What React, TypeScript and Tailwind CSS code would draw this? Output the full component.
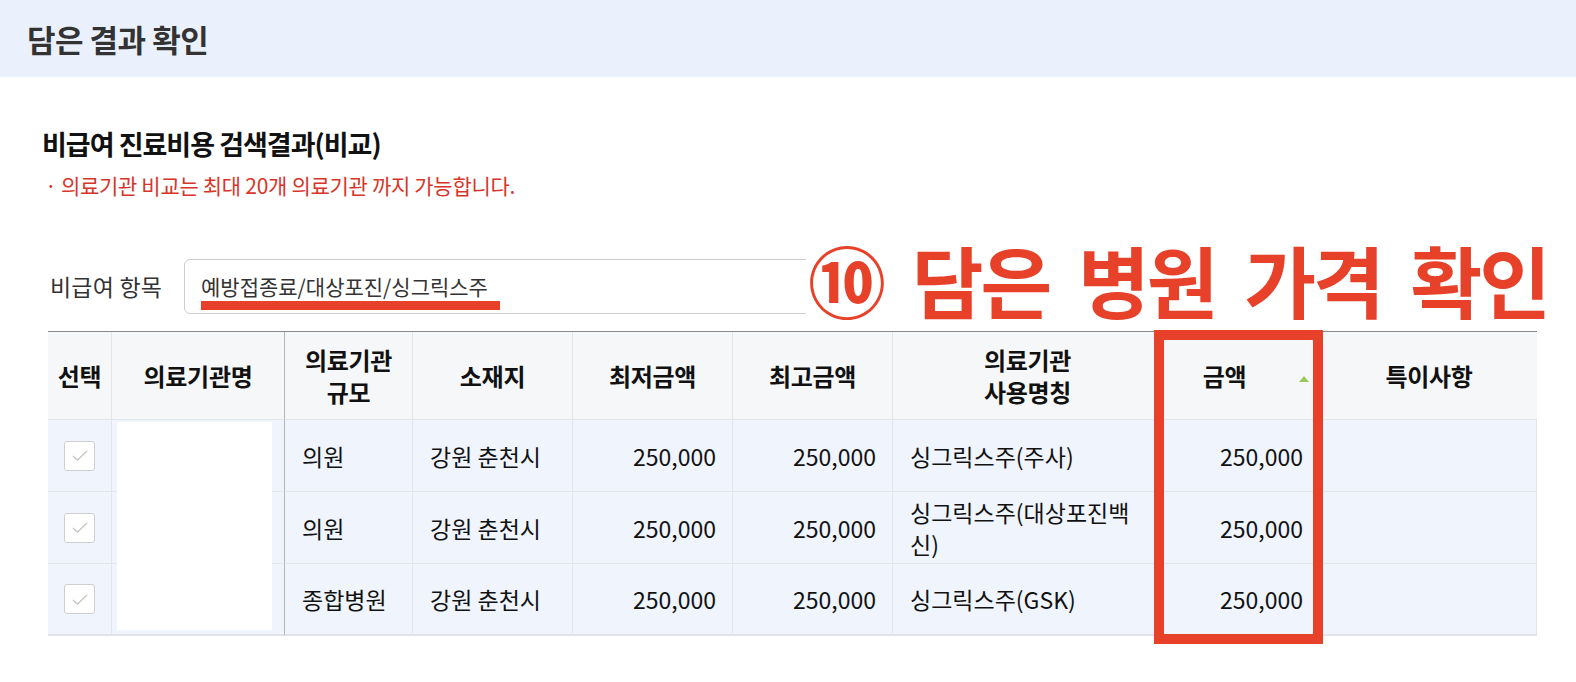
import React from 'react';

const cols = 'grid-cols-[64px_173px_128px_160px_160px_160px_270px_158px_216px]';

type Row = {
  size: string;
  place: string;
  min: string;
  max: string;
  name: React.ReactNode;
  price: string;
};

const rows: Row[] = [
  { size: '의원', place: '강원 춘천시', min: '250,000', max: '250,000', name: '싱그릭스주(주사)', price: '250,000' },
  {
    size: '의원',
    place: '강원 춘천시',
    min: '250,000',
    max: '250,000',
    name: (
      <>
        싱그릭스주(대상포진백
        <br />
        신)
      </>
    ),
    price: '250,000',
  },
  { size: '종합병원', place: '강원 춘천시', min: '250,000', max: '250,000', name: '싱그릭스주(GSK)', price: '250,000' },
];

function CheckBox() {
  return (
    <div className="flex h-[30px] w-[31px] items-center justify-center rounded-[3px] border border-[#cfcfcf] bg-white">
      <svg width="18" height="13" viewBox="0 0 18 13" fill="none">
        <path d="M2 7 L6.5 11 L16 2" stroke="#c6c6c6" strokeWidth="1.3" />
      </svg>
    </div>
  );
}

function HeadCell({ children, dark }: { children: React.ReactNode; dark?: boolean }) {
  return (
    <div
      className={`flex h-[88px] items-center justify-center border-b border-r border-b-[#e2e5ea] text-center text-[24px] font-bold leading-[32px] tracking-[-0.3px] text-[#111] ${
        dark ? 'border-r-[#b4b4b4]' : 'border-r-[#e2e5ea]'
      }`}
    >
      {children}
    </div>
  );
}

function Cell({
  children,
  align = 'left',
  dark,
  last,
  pr = 'pr-[16px]',
}: {
  children?: React.ReactNode;
  align?: 'left' | 'right' | 'center';
  dark?: boolean;
  last?: boolean;
  pr?: string;
}) {
  const a = align === 'right' ? `justify-end ${pr}` : align === 'center' ? 'justify-center' : 'justify-start pl-[17px]';
  return (
    <div
      className={`flex h-[72px] items-center border-r bg-[#eff4fd] text-[23px] leading-[32px] text-[#111] ${a} ${
        dark ? 'border-r-[#b4b4b4]' : 'border-r-[#e2e5ea]'
      } ${last ? 'border-b-2 border-b-[#e0e3e8]' : 'border-b border-b-[#e2e5ea]'}`}
    >
      {children}
    </div>
  );
}

export default function App() {
  return (
    <div className="relative min-h-[682px] w-[1576px] bg-white font-['Noto_Sans_CJK_KR',sans-serif]">
      <div className="flex h-[77px] items-center bg-[#eaf1fd] pl-[27px]">
        <h1 className="text-[31px] font-bold leading-none tracking-[-0.5px] text-[#333]">담은 결과 확인</h1>
      </div>

      <div className="pl-[48px]">
        <h2 className="mt-[49px] -ml-[6px] text-[27px] font-bold leading-[36px] tracking-[-1px] text-[#111]">
          비급여 진료비용 검색결과(비교)
        </h2>
        <p className="mt-[11px] -ml-[3px] text-[21px] leading-[24px] tracking-[-0.3px] text-[#d8352a]">
          · 의료기관 비교는 최대 20개 의료기관 까지 가능합니다.
        </p>

        <div className="mt-[62px] flex items-center">
          <span className="w-[136px] pl-[2px] text-[23px] tracking-[0.2px] text-[#333]">비급여 항목</span>
          <div className="relative flex h-[55px] w-[1000px] items-center rounded-[6px] border border-[#cdcdcd] pl-[16px]">
            <span className="text-[21px] text-[#333]">예방접종료/대상포진/싱그릭스주</span>
            <div className="absolute left-[16px] top-[41px] h-[9px] w-[299px] bg-[#e8412a]" />
          </div>
        </div>

        <div className={`relative mt-[17px] grid w-[1489px] ${cols} border-t border-t-[#8a8a8a] bg-[#f6f7f9]`}>
          <HeadCell>선택</HeadCell>
          <HeadCell dark>의료기관명</HeadCell>
          <HeadCell>
            의료기관
            <br />
            규모
          </HeadCell>
          <HeadCell>소재지</HeadCell>
          <HeadCell>최저금액</HeadCell>
          <HeadCell>최고금액</HeadCell>
          <HeadCell>
            의료기관
            <br />
            사용명칭
          </HeadCell>
          <div className="relative flex h-[88px] items-center justify-center border-b border-r border-[#e2e5ea] pr-[34px] text-[24px] font-bold tracking-[-0.3px] text-[#111]">
            금액
            <svg className="absolute right-[11px] top-[44px]" width="10" height="6" viewBox="0 0 10 6">
              <path d="M5 0 L10 6 L0 6 Z" fill="#9bc95f" />
            </svg>
          </div>
          <div className="flex h-[88px] items-center justify-center border-b border-[#e2e5ea] text-[24px] font-bold tracking-[-0.3px] text-[#111]">
            특이사항
          </div>

          {rows.map((r, i) => {
            const last = i === rows.length - 1;
            return (
              <React.Fragment key={i}>
                <Cell align="center" last={last}>
                  <CheckBox />
                </Cell>
                <Cell dark last={last} />
                <Cell last={last}>{r.size}</Cell>
                <Cell last={last}>{r.place}</Cell>
                <Cell align="right" last={last}>
                  {r.min}
                </Cell>
                <Cell align="right" last={last}>
                  {r.max}
                </Cell>
                <Cell last={last}>
                  <span className="leading-[32px]">{r.name}</span>
                </Cell>
                <Cell align="right" pr="pr-[17px]" last={last}>
                  {r.price}
                </Cell>
                <Cell last={last} />
              </React.Fragment>
            );
          })}

          {/* redacted hospital names */}
          <div className="absolute left-[69px] top-[90px] h-[208px] w-[155px] bg-white" />
        </div>
      </div>

      {/* annotation overlays */}
      <div className="absolute left-[806px] top-[236px] flex h-[86px] w-[770px] items-center bg-white pl-[2px]">
        <span className="text-[78px] font-bold leading-none tracking-[-3px] text-[#e8412a] [word-spacing:14px]">
          ⑩ 담은 병원 가격 확인
        </span>
      </div>
      <div className="absolute left-[1154px] top-[330px] h-[314px] w-[169px] border-[10px] border-[#e8412a]" />
    </div>
  );
}
